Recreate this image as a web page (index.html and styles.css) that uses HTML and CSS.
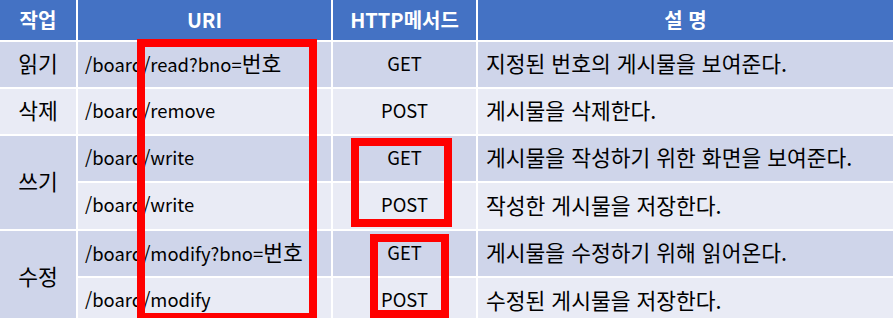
FILE: index.html
```html
<!DOCTYPE html>
<html lang="ko">
<head>
<meta charset="utf-8">
<title>게시판 URI</title>
<link rel="stylesheet" href="styles.css">
</head>
<body>
<div class="wrap">
  <div class="table">
    <div class="cell head">작업</div>
    <div class="cell head">URI</div>
    <div class="cell head">HTTP메서드</div>
    <div class="cell head">설 명</div>

    <div class="cell dark ko center">읽기</div>
    <div class="cell dark lat uri"><span>/board/read?bno=<span class="ko">번호</span></span></div>
    <div class="cell dark lat center">GET</div>
    <div class="cell dark ko desc">지정된 번호의 게시물을 보여준다.</div>

    <div class="cell light ko center">삭제</div>
    <div class="cell light lat uri">/board/remove</div>
    <div class="cell light lat center">POST</div>
    <div class="cell light ko desc">게시물을 삭제한다.</div>

    <div class="cell dark ko center span2">쓰기</div>
    <div class="cell dark lat uri">/board/write</div>
    <div class="cell dark lat center">GET</div>
    <div class="cell dark ko desc">게시물을 작성하기 위한 화면을 보여준다.</div>

    <div class="cell light lat uri">/board/write</div>
    <div class="cell light lat center">POST</div>
    <div class="cell light ko desc">작성한 게시물을 저장한다.</div>

    <div class="cell dark ko center span2">수정</div>
    <div class="cell dark lat uri"><span>/board/modify?bno=<span class="ko">번호</span></span></div>
    <div class="cell dark lat center">GET</div>
    <div class="cell dark ko desc">게시물을 수정하기 위해 읽어온다.</div>

    <div class="cell light lat uri">/board/modify</div>
    <div class="cell light lat center">POST</div>
    <div class="cell light ko desc">수정된 게시물을 저장한다.</div>
  </div>
  <div class="mark mark-uri"></div>
  <div class="mark mark-write"></div>
  <div class="mark mark-modify"></div>
</div>
</body>
</html>
```
FILE: styles.css
```css
html, body {
  margin: 0;
  padding: 0;
  overflow: hidden;
  background: #ffffff;
}

body {
  font-family: "Noto Sans CJK KR", "Noto Sans", sans-serif;
  font-size: 20px;
  color: #000000;
}

.wrap {
  position: relative;
  width: 893px;
  height: 318px;
}

.table {
  display: grid;
  grid-template-columns: 76px 253px 143px 1fr;
  grid-template-rows: 40px 45px 45px 45px 46px 45px 46px;
  column-gap: 2px;
  row-gap: 2px;
  background: #ffffff;
}

.cell {
  display: flex;
  align-items: center;
  line-height: 1;
  white-space: nowrap;
  overflow: hidden;
  padding-bottom: 3px;
  box-sizing: border-box;
}

.head {
  background: #4472c4;
  color: #ffffff;
  font-weight: 700;
  font-size: 20px;
  justify-content: center;
  padding-bottom: 1px;
}

.dark {
  background: #cfd5ea;
}

.light {
  background: #e9ebf5;
}

.lat {
  font-size: 18.4px;
}

.ko {
  font-size: 21.5px;
}

.center {
  justify-content: center;
}

.uri {
  padding-left: 7px;
}

.desc {
  padding-left: 8px;
}

.span2 {
  grid-row: span 2;
}

.mark {
  position: absolute;
  box-sizing: border-box;
  border: 8px solid #ff0000;
}

.mark-uri {
  left: 137px;
  top: 39px;
  width: 180px;
  height: 282px;
}

.mark-write {
  left: 351px;
  top: 138px;
  width: 101px;
  height: 89px;
}

.mark-modify {
  left: 370px;
  top: 234px;
  width: 79px;
  height: 84px;
}
```
